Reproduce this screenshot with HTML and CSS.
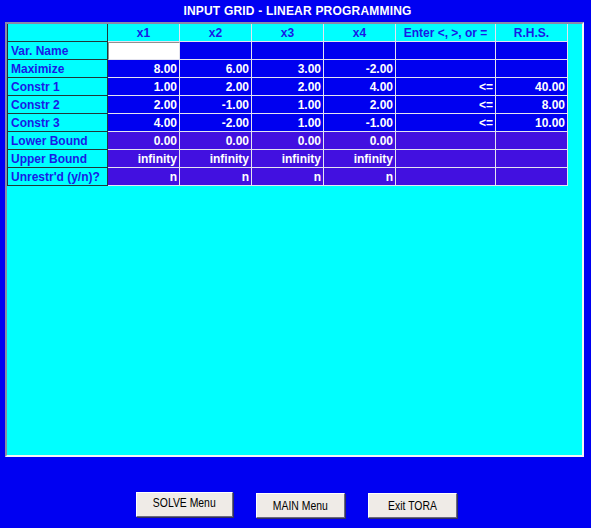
FILE: index.html
```html
<!DOCTYPE html>
<html>
<head>
<meta charset="utf-8">
<link rel="stylesheet" href="styles.css">
</head>
<body>
<div class="title">INPUT GRID - LINEAR PROGRAMMING</div>
<div class="panel">
  <div class="grid">
    <div class="cell lbl"></div>
    <div class="cell hdr">x1</div>
    <div class="cell hdr">x2</div>
    <div class="cell hdr">x3</div>
    <div class="cell hdr">x4</div>
    <div class="cell hdr">Enter &lt;, &gt;, or =</div>
    <div class="cell hdr">R.H.S.</div>

    <div class="cell lbl">Var. Name</div>
    <div class="cell edit"></div>
    <div class="cell blue"></div>
    <div class="cell blue"></div>
    <div class="cell blue"></div>
    <div class="cell blue"></div>
    <div class="cell blue"></div>

    <div class="cell lbl">Maximize</div>
    <div class="cell blue">8.00</div>
    <div class="cell blue">6.00</div>
    <div class="cell blue">3.00</div>
    <div class="cell blue">-2.00</div>
    <div class="cell blue"></div>
    <div class="cell blue"></div>

    <div class="cell lbl">Constr 1</div>
    <div class="cell blue">1.00</div>
    <div class="cell blue">2.00</div>
    <div class="cell blue">2.00</div>
    <div class="cell blue">4.00</div>
    <div class="cell blue">&lt;=</div>
    <div class="cell blue">40.00</div>

    <div class="cell lbl">Constr 2</div>
    <div class="cell blue">2.00</div>
    <div class="cell blue">-1.00</div>
    <div class="cell blue">1.00</div>
    <div class="cell blue">2.00</div>
    <div class="cell blue">&lt;=</div>
    <div class="cell blue">8.00</div>

    <div class="cell lbl">Constr 3</div>
    <div class="cell blue">4.00</div>
    <div class="cell blue">-2.00</div>
    <div class="cell blue">1.00</div>
    <div class="cell blue">-1.00</div>
    <div class="cell blue">&lt;=</div>
    <div class="cell blue">10.00</div>

    <div class="cell lbl">Lower Bound</div>
    <div class="cell purple">0.00</div>
    <div class="cell purple">0.00</div>
    <div class="cell purple">0.00</div>
    <div class="cell purple">0.00</div>
    <div class="cell purple"></div>
    <div class="cell purple"></div>

    <div class="cell lbl">Upper Bound</div>
    <div class="cell purple">infinity</div>
    <div class="cell purple">infinity</div>
    <div class="cell purple">infinity</div>
    <div class="cell purple">infinity</div>
    <div class="cell purple"></div>
    <div class="cell purple"></div>

    <div class="cell lbl">Unrestr'd (y/n)?</div>
    <div class="cell purple">n</div>
    <div class="cell purple">n</div>
    <div class="cell purple">n</div>
    <div class="cell purple">n</div>
    <div class="cell purple"></div>
    <div class="cell purple"></div>
  </div>
</div>
<div class="buttons">
  <div class="btn btn-solve"><span class="btn-text">SOLVE Menu</span></div>
  <div class="btn"><span class="btn-text">MAIN Menu</span></div>
  <div class="btn"><span class="btn-text">Exit TORA</span></div>
</div>
</body>
</html>
```

FILE: styles.css
```css
html, body {
  margin: 0;
  padding: 0;
}
body {
  background: #0000f2;
  width: 591px;
  height: 528px;
  overflow: hidden;
  font-family: "Liberation Sans", Arial, sans-serif;
}
.title {
  height: 22px;
  line-height: 22px;
  text-align: center;
  color: #ffffff;
  font-weight: bold;
  font-size: 12px;
  letter-spacing: 0.2px;
  padding-left: 4px;
}
.panel {
  margin-left: 5px;
  width: 575px;
  height: 431px;
  background: #00ffff;
  border-style: solid;
  border-width: 2px;
  border-color: #8a8aa8 #f4f4f4 #f4f4f4 #8a8aa8;
}
.grid {
  display: grid;
  grid-template-columns: 100px 72px 72px 72px 72px 100px 72px;
  grid-auto-rows: 18px;
  width: 560px;
  border-left: 1px solid #203838;
}
.cell {
  box-sizing: border-box;
  border-right: 1px solid #e4e4f0;
  border-bottom: 1px solid #e4e4f0;
  font-size: 12px;
  font-weight: bold;
  line-height: 16px;
  padding-top: 1px;
  white-space: nowrap;
  overflow: hidden;
}
.lbl {
  background: #00ffff;
  color: #1a1ae6;
  padding-left: 3px;
  border-right-color: #203838;
  border-bottom-color: #203838;
}
.hdr {
  background: #00ffff;
  color: #1a1ae6;
  text-align: center;
}
.blue {
  background: #0000f0;
  color: #ffffff;
  text-align: right;
  padding-right: 2px;
}
.purple {
  background: #4210e0;
  color: #ffffff;
  text-align: right;
  padding-right: 2px;
}
.edit {
  background: #ffffff;
  border-top: 1px solid #909090;
  border-left: 1px solid #909090;
}
.buttons {
  display: flex;
  justify-content: center;
  align-items: flex-start;
  gap: 23px;
  margin-top: 35px;
  padding-left: 1px;
}
.btn {
  box-sizing: border-box;
  width: 89px;
  height: 25px;
  margin-top: 1px;
  background: #efebe7;
  border-style: solid;
  border-width: 1px;
  border-color: #ffffff #6a6a80 #6a6a80 #ffffff;
  box-shadow: 1px 1px 0 #303060;
  font-size: 13px;
  line-height: 24px;
  text-align: center;
  color: #000000;
}
.btn-text {
  display: inline-block;
  transform: scaleX(0.8);
}
.btn-solve {
  width: 97px;
  margin-top: 0;
  line-height: 20px;
}
```
